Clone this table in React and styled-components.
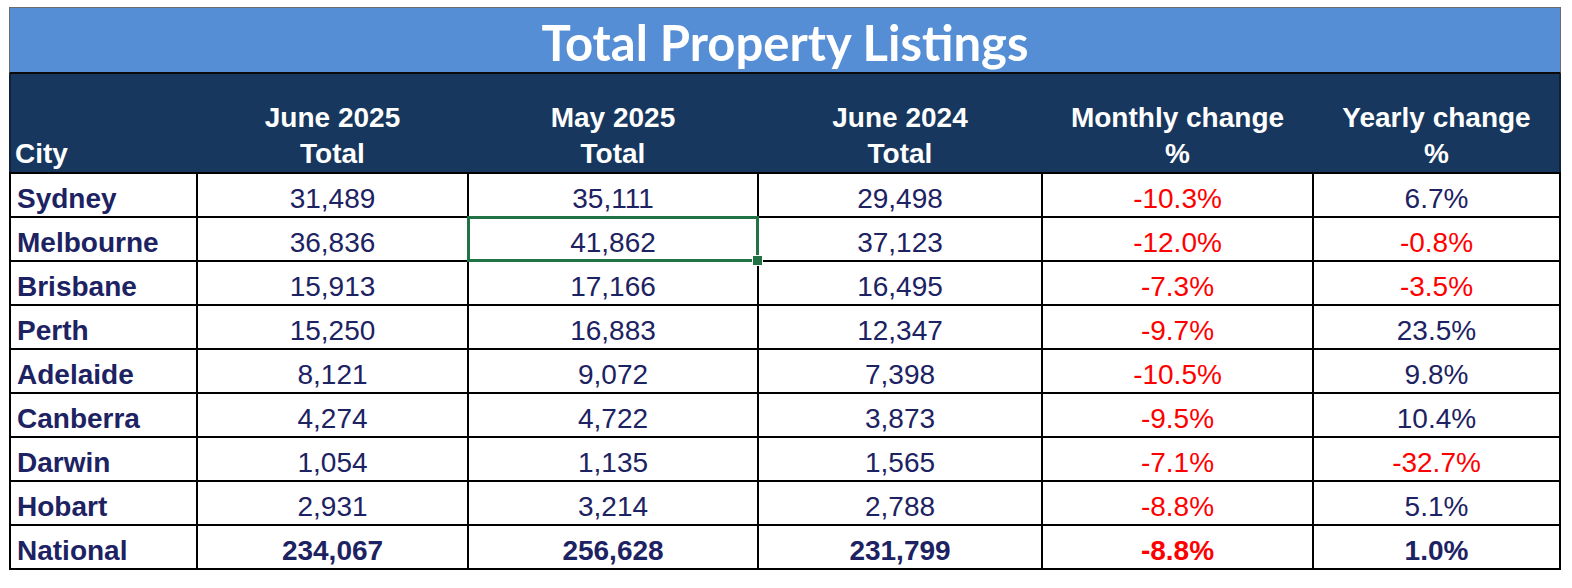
import React from 'react';
import styled, { createGlobalStyle } from 'styled-components';

const GlobalStyle = createGlobalStyle`
  html, body {
    margin: 0;
    padding: 0;
    background: #ffffff;
  }
  body {
    font-family: "Liberation Sans", Arial, sans-serif;
  }
`;

const COLUMNS = '185px 269px 288px 282px 269px 245px';

const Sheet = styled.div`
  width: 1552px;
  margin: 7px 0 0 9px;
`;

const TitleBar = styled.div`
  display: flex;
  align-items: center;
  justify-content: center;
  box-sizing: border-box;
  height: 67px;
  padding-top: 4px;
  background-color: #558ed5;
  border: 1px solid #6b6b6b;
  border-bottom: 2px solid #0a0a0a;
  color: #ffffff;
  font-family: Lato, "Open Sans", sans-serif;
  font-weight: 700;
  font-size: 49px;
`;

const HeaderRow = styled.div`
  display: grid;
  grid-template-columns: ${COLUMNS};
  column-gap: 2px;
  height: 98px;
  background-color: #17375e;
  border-left: 2px solid #0f2238;
  border-right: 2px solid #0f2238;
`;

const HeadCell = styled.div`
  display: flex;
  flex-direction: column;
  justify-content: flex-end;
  align-items: ${({ $left }) => ($left ? 'flex-start' : 'center')};
  padding-left: ${({ $left }) => ($left ? '4px' : '0')};
  color: #ffffff;
  font-weight: 700;
  font-size: 28px;
  line-height: 36px;
  text-align: center;
`;

const Body = styled.div`
  display: grid;
  grid-template-columns: ${COLUMNS};
  grid-auto-rows: 42px;
  gap: 2px;
  background-color: #000000;
  border: 2px solid #000000;
`;

const Cell = styled.div`
  position: relative;
  display: flex;
  align-items: flex-end;
  justify-content: ${({ $left }) => ($left ? 'flex-start' : 'center')};
  padding: 0 0 1px ${({ $left }) => ($left ? '6px' : '0')};
  background-color: #ffffff;
  color: ${({ $red }) => ($red ? '#ff0000' : '#1c2262')};
  font-size: 28px;
  line-height: 32px;
  font-weight: ${({ $bold }) => ($bold ? 700 : 400)};
  white-space: nowrap;
`;

const Selection = styled.div`
  position: absolute;
  z-index: 2;
  left: -2px;
  top: -2px;
  right: -2px;
  bottom: -2px;
  border: 3px solid #217346;
  pointer-events: none;

  &::after {
    content: '';
    position: absolute;
    right: -7px;
    bottom: -7px;
    width: 9px;
    height: 9px;
    background-color: #217346;
    border: 1px solid #ffffff;
  }
`;

const rows = [
  ['Sydney', '31,489', '35,111', '29,498', '-10.3%', '6.7%'],
  ['Melbourne', '36,836', '41,862', '37,123', '-12.0%', '-0.8%'],
  ['Brisbane', '15,913', '17,166', '16,495', '-7.3%', '-3.5%'],
  ['Perth', '15,250', '16,883', '12,347', '-9.7%', '23.5%'],
  ['Adelaide', '8,121', '9,072', '7,398', '-10.5%', '9.8%'],
  ['Canberra', '4,274', '4,722', '3,873', '-9.5%', '10.4%'],
  ['Darwin', '1,054', '1,135', '1,565', '-7.1%', '-32.7%'],
  ['Hobart', '2,931', '3,214', '2,788', '-8.8%', '5.1%'],
  ['National', '234,067', '256,628', '231,799', '-8.8%', '1.0%'],
];

const headers = [
  ['June 2025', 'Total'],
  ['May 2025', 'Total'],
  ['June 2024', 'Total'],
  ['Monthly change', '%'],
  ['Yearly change', '%'],
];

function App() {
  return (
    <>
      <GlobalStyle />
      <Sheet>
        <TitleBar>Total Property Listings</TitleBar>
        <HeaderRow>
          <HeadCell $left>City</HeadCell>
          {headers.map(([a, b]) => (
            <HeadCell key={a}>
              <span>{a}</span>
              <span>{b}</span>
            </HeadCell>
          ))}
        </HeaderRow>
        <Body>
          {rows.map((row, r) => {
            const total = row[0] === 'National';
            return row.map((value, c) => (
              <Cell
                key={`${r}-${c}`}
                $left={c === 0}
                $bold={c === 0 || total}
                $red={value.startsWith('-')}
              >
                {value}
                {r === 1 && c === 2 && <Selection />}
              </Cell>
            ));
          })}
        </Body>
      </Sheet>
    </>
  );
}

export default App;
